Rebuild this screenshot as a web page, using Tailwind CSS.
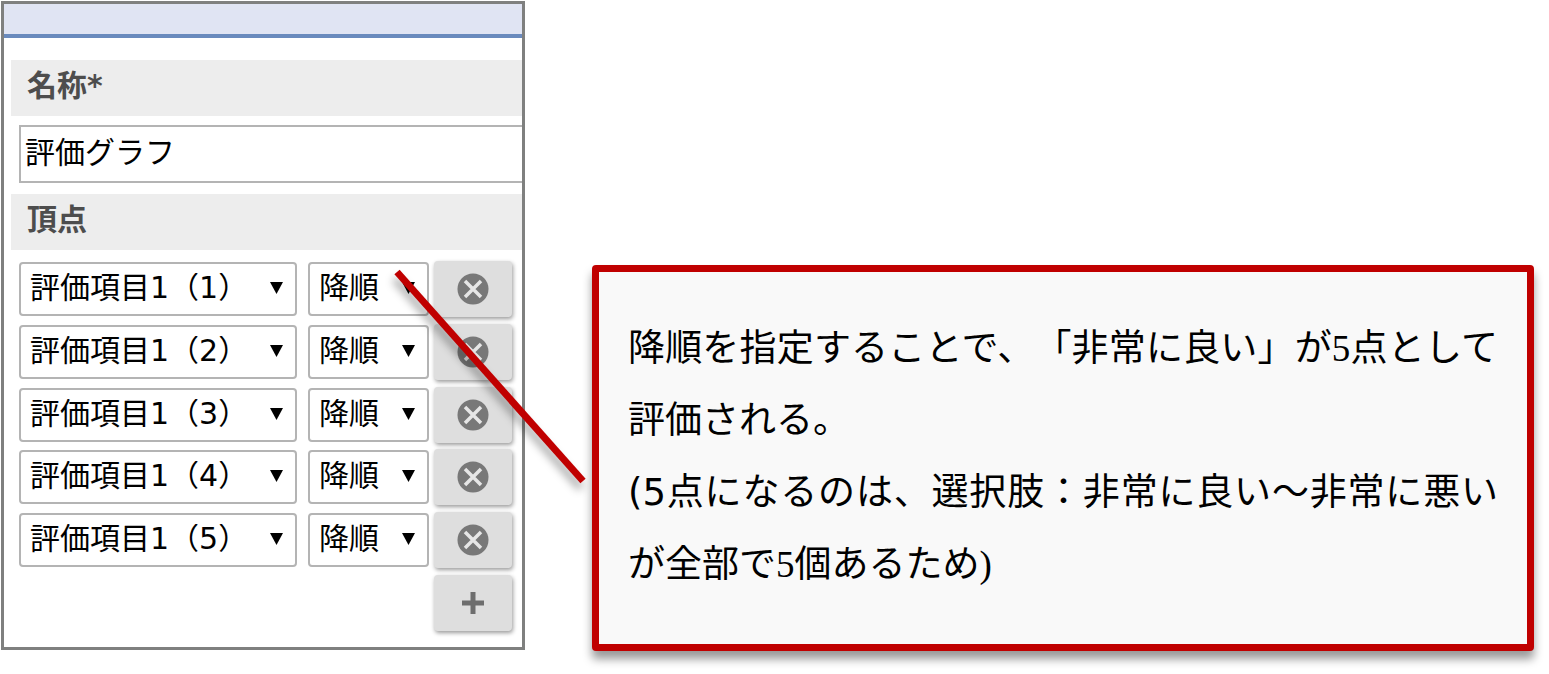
<!DOCTYPE html>
<html lang="ja">
<head>
  <meta charset="UTF-8" />
  <meta name="viewport" content="width=device-width, initial-scale=1.0" />
  <title>評価グラフ</title>
  <script src="https://cdn.jsdelivr.net/npm/@tailwindcss/browser@4"></script>
</head>
<body class="min-h-screen bg-white text-black font-['DejaVu_Sans','Noto_Sans_CJK_JP',sans-serif] [text-spacing-trim:space-all]">
  <main class="flex items-start gap-[67px] min-h-screen pl-px pt-px pr-[15px]">

    <!-- 設定パネル -->
    <div class="relative shrink-0">
      <form class="w-[524px] border-3 border-[#7f807f] bg-white overflow-hidden pb-[13px]">
        <div class="h-[34px] bg-[#e0e4f3] border-b-4 border-[#6a8abd]"></div>

        <div class="mt-[22px] ml-[7px] h-14 px-4 pb-1 flex items-center bg-[#ededed]">
          <label for="name" class="text-[30px] leading-none font-bold text-[#4d4d4d]">名称*</label>
        </div>
        <div class="mt-[9px] ml-[15px] -mr-1">
          <input id="name" type="text" value="評価グラフ" class="block w-full h-[58px] border-2 border-[#b4b4b4] pl-1 pb-2 text-[30px] leading-none" />
        </div>

        <div class="mt-[11px] ml-[7px] h-14 px-4 pb-1 flex items-center bg-[#ededed]">
          <h2 class="text-[30px] leading-none font-bold text-[#4d4d4d]">頂点</h2>
        </div>
        <div id="vertices" class="mt-2 ml-[15px] mr-[10px] min-h-[376px] grid auto-rows-fr">
          <div class="flex justify-end items-center">
            <button type="button" aria-label="追加" class="w-[78px] h-14 flex items-center justify-center bg-[#dedede] rounded-sm shadow-[1px_2px_4px_rgba(0,0,0,0.4)]">
              <svg class="size-6" viewBox="0 0 24 24"><path d="M12 1v22M1 12h22" stroke="#6e6e6e" stroke-width="5" /></svg>
            </button>
          </div>
        </div>
      </form>

      <!-- 吹き出しへの引き出し線 -->
      <svg class="absolute left-0 top-0 w-[600px] h-[500px] pointer-events-none drop-shadow-[-2px_7px_4px_rgba(0,0,0,0.35)]" viewBox="0 0 600 500">
        <line x1="396" y1="271" x2="582" y2="480" stroke="#c00000" stroke-width="7" />
      </svg>
    </div>

    <!-- 説明 -->
    <aside class="flex-1 mt-[264px] border-7 border-[#c00000] rounded bg-[#f9f9f9] pt-[41px] pb-[43px] px-[29px] shadow-[0_8px_10px_rgba(0,0,0,0.4)]">
      <p class="text-[37px] leading-[72px] text-justify font-['Liberation_Serif','Noto_Sans_CJK_JP',serif]">降順を指定することで、「非常に良い」が5点として評価される。<br /><span class="font-['DejaVu_Sans']">(5</span>点になるのは、選択肢：非常に良い～非常に悪いが全部で5個あるため)</p>
    </aside>
  </main>

<template id="row">
  <div class="flex items-center">
    <div class="relative w-[278px]">
      <select aria-label="項目" class="item appearance-none block w-full h-[54px] border-2 border-[#b4b4b4] rounded-sm bg-white pl-[9px] pb-0.5 text-[30px] leading-none"></select>
      <svg class="absolute right-[14px] top-5 w-[13px] h-3 pointer-events-none" viewBox="0 0 13 12"><path d="M0 0h13L6.5 12z" /></svg>
    </div>
    <div class="relative w-[121px] ml-[11px]">
      <select aria-label="並び順" class="appearance-none block w-full h-[54px] border-2 border-[#b4b4b4] rounded-sm bg-white pl-[9px] pb-0.5 text-[30px] leading-none">
        <option>降順</option>
        <option>昇順</option>
      </select>
      <svg class="absolute right-[14px] top-5 w-[13px] h-3 pointer-events-none" viewBox="0 0 13 12"><path d="M0 0h13L6.5 12z" /></svg>
    </div>
    <button type="button" aria-label="削除" class="ml-auto w-[78px] h-14 flex items-center justify-center bg-[#dedede] rounded-sm shadow-[1px_2px_4px_rgba(0,0,0,0.4)]">
      <svg class="size-8" viewBox="0 0 32 32">
        <circle cx="16" cy="16" r="15.5" fill="#787878" />
        <path d="M8 8l16 16M24 8l-16 16" stroke="#e6e6e6" stroke-width="3.5" />
      </svg>
    </button>
  </div>
</template>

<script>
  const list = document.getElementById('vertices');
  const row = document.getElementById('row');
  const addRow = list.lastElementChild;
  for (let i = 1; i <= 5; i++) {
    const el = row.content.cloneNode(true);
    const select = el.querySelector('.item');
    for (let n = 1; n <= 5; n++) {
      select.add(new Option('評価項目1（' + n + '）', n, n === i, n === i));
    }
    list.insertBefore(el, addRow);
  }
</script>

</body>
</html>
